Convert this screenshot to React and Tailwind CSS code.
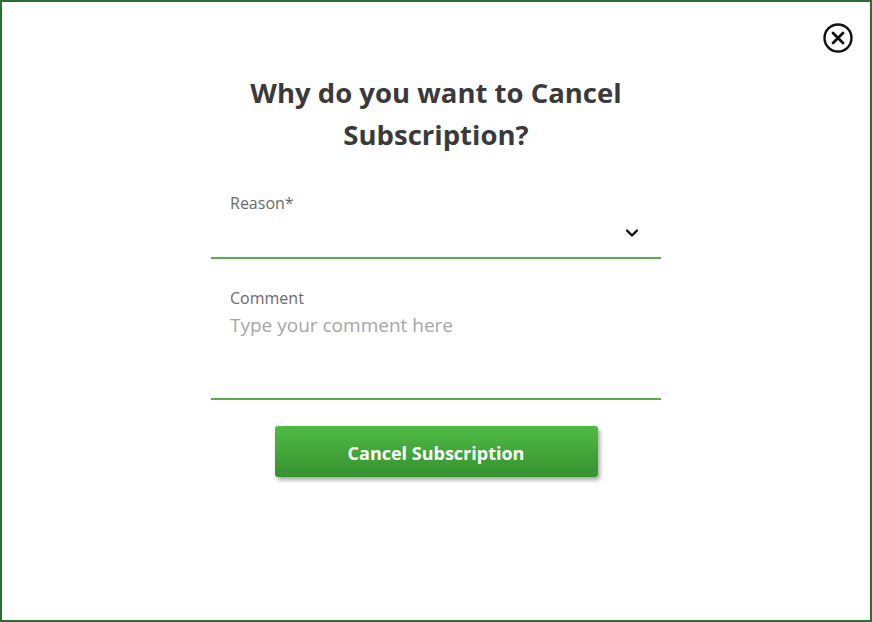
export default function App() {
  return (
    <div className="w-[872px] h-[622px] bg-white border-2 border-[#2d6e35] relative box-border" style={{ fontFamily: '"Open Sans", "Noto Sans", sans-serif' }}>
      <button className="absolute top-[20px] right-[16px] w-[32px] h-[32px] flex items-center justify-center">
        <svg width="32" height="32" viewBox="0 0 32 32" fill="none" stroke="#111" strokeWidth="2.4" strokeLinecap="round">
          <circle cx="16" cy="16" r="13.5" />
          <path d="M11 11 L21 21 M21 11 L11 21" strokeWidth="2.8" />
        </svg>
      </button>
      <div className="flex flex-col items-center pt-[70px]">
        <h1 className="text-[27.5px] leading-[42px] font-bold text-[#3a3a3a] text-center">
          Why do you want to Cancel<br />Subscription?
        </h1>
        <div className="w-[450px] mt-[36px] flex flex-col">
          <div className="border-b-2 border-[#5aab4a] h-[67px] pl-[19px] pr-[20px] relative">
            <div className="text-[16px] text-[#6b6b6b] leading-[22px]">Reason*</div>
            <svg className="absolute right-[22px] top-[36px]" width="14" height="10" viewBox="0 0 14 10" fill="none" stroke="#111" strokeWidth="2.4" strokeLinecap="round" strokeLinejoin="round">
              <path d="M2 2.5 L7 7.5 L12 2.5" />
            </svg>
          </div>
          <div className="border-b-2 border-[#5aab4a] h-[141px] pl-[19px] pt-[28px]">
            <div className="text-[16px] text-[#6b6b6b] leading-[22px]">Comment</div>
            <div className="text-[19px] text-[#a6a6a6] leading-[26px] mt-[3px]">Type your comment here</div>
          </div>
        </div>
        <button className="mt-[26px] w-[323px] h-[51px] pt-[3px] rounded-[3px] bg-gradient-to-b from-[#4fbb45] to-[#36922f] text-white text-[18px] font-bold shadow-[2px_3px_4px_rgba(0,0,0,0.35)]">
          Cancel Subscription
        </button>
      </div>
    </div>
  );
}
